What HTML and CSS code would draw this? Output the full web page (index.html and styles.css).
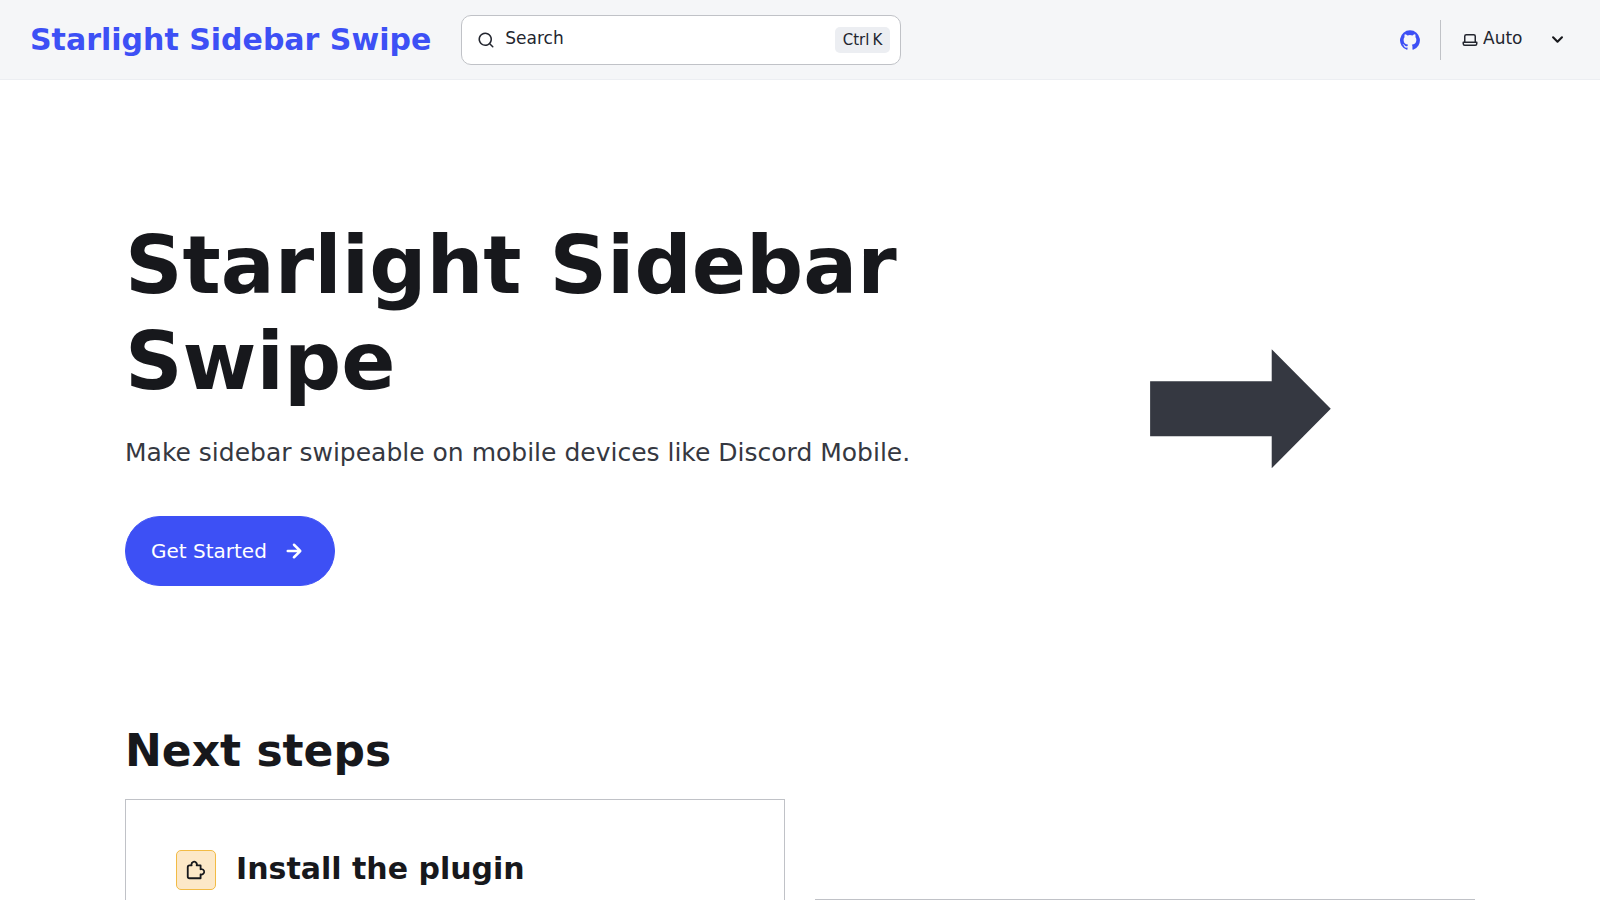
FILE: index.html
```html
<!DOCTYPE html>
<html lang="en">
<head>
<meta charset="utf-8">
<meta name="viewport" content="width=device-width, initial-scale=1">
<title>Starlight Sidebar Swipe</title>
<link rel="stylesheet" href="styles.css">
</head>
<body>
<header class="header">
  <a class="site-title" href="#">Starlight Sidebar Swipe</a>
  <div class="search-area">
    <button class="search" type="button">
      <svg class="icon" viewBox="0 0 24 24" aria-hidden="true"><path d="M21.71 20.29 18 16.61A9 9 0 1 0 16.61 18l3.68 3.68a.999.999 0 0 0 1.42 0 1 1 0 0 0 0-1.39ZM11 18a7 7 0 1 1 0-14 7 7 0 0 1 0 14Z"/></svg>
      <span class="search-label">Search</span>
      <kbd class="shortcut"><kbd>Ctrl</kbd><kbd>K</kbd></kbd>
    </button>
  </div>
  <div class="tools">
    <a class="social" href="#" aria-label="GitHub">
      <svg class="icon" viewBox="0 0 24 24" aria-hidden="true"><path d="M12 .3a12 12 0 0 0-3.8 23.38c.6.12.83-.26.83-.57L9 21.07c-3.34.72-4.04-1.61-4.04-1.61-.55-1.39-1.34-1.76-1.34-1.76-1.08-.74.09-.73.09-.73 1.2.09 1.83 1.24 1.83 1.24 1.08 1.83 2.81 1.3 3.5 1 .1-.78.42-1.31.76-1.61-2.67-.3-5.47-1.33-5.47-5.93 0-1.31.47-2.38 1.24-3.22-.14-.3-.54-1.52.1-3.18 0 0 1-.32 3.3 1.23a11.5 11.5 0 0 1 6 0c2.28-1.55 3.29-1.23 3.29-1.23.64 1.66.24 2.88.12 3.18a4.65 4.65 0 0 1 1.23 3.22c0 4.61-2.8 5.63-5.48 5.92.42.36.81 1.1.81 2.22l-.01 3.29c0 .31.2.69.82.57A12 12 0 0 0 12 .3Z"/></svg>
    </a>
    <label class="theme">
      <svg class="icon laptop" viewBox="0 0 24 24" aria-hidden="true"><path d="M21 14h-1V7a3 3 0 0 0-3-3H7a3 3 0 0 0-3 3v7H3a1 1 0 0 0-1 1v2a3 3 0 0 0 3 3h14a3 3 0 0 0 3-3v-2a1 1 0 0 0-1-1ZM6 7a1 1 0 0 1 1-1h10a1 1 0 0 1 1 1v7H6V7Zm14 10a1 1 0 0 1-1 1H5a1 1 0 0 1-1-1v-1h16v1Z"/></svg>
      <select class="theme-select" aria-label="Select theme">
        <option>Auto</option>
        <option>Dark</option>
        <option>Light</option>
      </select>
      <svg class="icon caret" viewBox="0 0 24 24" aria-hidden="true"><path d="M17 9.17a1 1 0 0 0-1.41 0L12 12.71 8.46 9.17a1 1 0 1 0-1.41 1.42l4.24 4.24a1.002 1.002 0 0 0 1.42 0L17 10.59a1.002 1.002 0 0 0 0-1.42Z"/></svg>
    </label>
  </div>
</header>
<main class="content">
  <section class="hero">
    <div class="hero-copy">
      <h1>Starlight Sidebar Swipe</h1>
      <p class="tagline">Make sidebar swipeable on mobile devices like Discord Mobile.</p>
      <a class="action" href="#">Get Started
        <svg class="icon" viewBox="0 0 24 24" aria-hidden="true"><path d="M17.92 11.62a1.001 1.001 0 0 0-.21-.33l-5-5a1.003 1.003 0 1 0-1.42 1.42l3.3 3.29H7a1 1 0 0 0 0 2h7.59l-3.3 3.29a1.002 1.002 0 0 0 .325 1.639 1 1 0 0 0 1.095-.219l5-5a1 1 0 0 0 .21-.33 1 1 0 0 0 0-.76Z"/></svg>
      </a>
    </div>
    <svg class="hero-art" viewBox="0 0 476 476" aria-hidden="true"><path d="M151 211H272.500V179L331.500 238.500 272.500 298V266H151Z"/></svg>
  </section>
  <section class="steps">
    <h2>Next steps</h2>
    <div class="card-grid">
      <article class="card">
        <h3 class="card-title">
          <span class="card-icon"><svg class="icon" viewBox="0 0 24 24" aria-hidden="true"><path d="M17 22H5a3 3 0 0 1-3-3V9a3 3 0 0 1 3-3h1a4 4 0 0 1 7.3-2.18c.448.64.692 1.4.7 2.18h3a1 1 0 0 1 1 1v3a4 4 0 0 1 2.18 7.3A3.86 3.86 0 0 1 18 18v3a1 1 0 0 1-1 1ZM5 8a1 1 0 0 0-1 1v10a1 1 0 0 0 1 1h11v-3.180a1 1 0 0 1 1.330-.950 1.770 1.770 0 0 0 1.740-.230 2 2 0 0 0 .930-1.370 2 2 0 0 0-.480-1.590 1.890 1.890 0 0 0-2.170-.550 1 1 0 0 1-1.330-.950V8h-3.200a1 1 0 0 1-1-1.330 1.770 1.770 0 0 0-.230-1.740 1.939 1.939 0 0 0-3-.430A2 2 0 0 0 8 6c.002.230.046.456.130.670a1 1 0 0 1-1 1.330H5Z"/></svg></span>
          <span class="card-heading">Install the plugin</span>
        </h3>
      </article>
      <article class="card card-staggered"></article>
    </div>
  </section>
</main>
</body>
</html>
```

FILE: styles.css
```css
:root {
  --accent: #3d50f5;
  --heading: #17181c;
  --text: #353841;
  --line: #c0c2c7;
  --line-soft: #eceef2;
  --bar: #f5f6f8;
}

* {
  box-sizing: border-box;
  margin: 0;
}

body {
  height: 100vh;
  overflow: hidden;
  background: #fff;
  color: var(--text);
  font: 20px/1.75 "DejaVu Sans", sans-serif;
}

a {
  text-decoration: none;
}

.icon {
  flex: none;
  width: 20px;
  height: 20px;
  fill: currentColor;
}

.header {
  display: flex;
  align-items: center;
  gap: 30px;
  height: 80px;
  padding: 0 30px;
  border-bottom: 1px solid var(--line-soft);
  background: var(--bar);
}

.site-title {
  color: var(--accent);
  font-size: 30px;
  font-weight: 700;
  line-height: 36px;
  white-space: nowrap;
}

.search-area {
  flex: 1;
}

.search {
  display: flex;
  align-items: center;
  gap: 10px;
  width: 100%;
  max-width: 440px;
  height: 50px;
  padding: 0 10px 0 15px;
  border: 1px solid var(--line);
  border-radius: 10px;
  background: #fff;
  color: #23262f;
  font: inherit;
  font-size: 17px;
  line-height: 22px;
}

.search .icon,
.laptop {
  width: 18px;
  height: 18px;
}

.search-label {
  flex: 1;
  padding-bottom: 4px;
  text-align: left;
}

.shortcut {
  display: flex;
  gap: 3px;
  padding: 0 8px;
  border-radius: 5px;
  background: var(--line-soft);
  font-size: 15px;
  line-height: 26px;
}

kbd {
  font-family: inherit;
}

.tools {
  display: flex;
  align-items: center;
  gap: 20px;
}

.social {
  display: flex;
  align-items: center;
  height: 40px;
  padding-right: 20px;
  border-right: 1px solid var(--line);
  color: var(--accent);
}

.theme {
  display: flex;
  align-items: center;
  color: #23262f;
}

.theme-select {
  width: 66px;
  padding: 0 0 4px 4px;
  border: 0;
  appearance: none;
  background: transparent;
  color: inherit;
  font: inherit;
  font-size: 17px;
  line-height: 24px;
}

.caret {
  width: 25px;
  height: 25px;
  color: var(--heading);
}

.content {
  max-width: 1350px;
  margin: 0 auto;
}

h1,
h2,
h3 {
  color: var(--heading);
  font-weight: 700;
  line-height: 1.2;
}

.hero {
  display: grid;
  grid-template-columns: 7fr 4fr;
  align-items: center;
  gap: 40px;
  padding: 90px 0 79px;
}

.hero-copy {
  display: flex;
  flex-direction: column;
  align-items: flex-start;
  padding-bottom: 12px;
}

h1 {
  font-size: 80px;
}

.tagline {
  margin-top: 20px;
  font-size: 25px;
  line-height: 46px;
}

.action {
  display: flex;
  align-items: center;
  gap: 12px;
  height: 70px;
  margin-top: 40px;
  padding: 0 25px;
  border: 1px solid var(--accent);
  border-radius: 35px;
  background: var(--accent);
  color: #fff;
  line-height: 24px;
}

.action .icon {
  width: 30px;
  height: 30px;
}

.hero-art {
  width: 100%;
  fill: var(--text);
}

.steps h2 {
  margin-bottom: 21px;
  font-size: 44px;
}

.card-grid {
  display: grid;
  grid-template-columns: 1fr 1fr;
  gap: 30px;
}

.card {
  min-height: 220px;
  padding: 50px;
  border: 1px solid var(--line);
}

.card-staggered {
  margin-top: 100px;
}

.card-title {
  display: flex;
  align-items: center;
  gap: 20px;
  font-size: 30px;
}

.card-heading {
  padding-bottom: 2px;
}

.card-icon {
  display: flex;
  align-items: center;
  justify-content: center;
  width: 40px;
  height: 40px;
  border: 1px solid #f2bb45;
  border-radius: 5px;
  background: #fce8c8;
}

.card-icon .icon {
  width: 22px;
  height: 22px;
}
```
